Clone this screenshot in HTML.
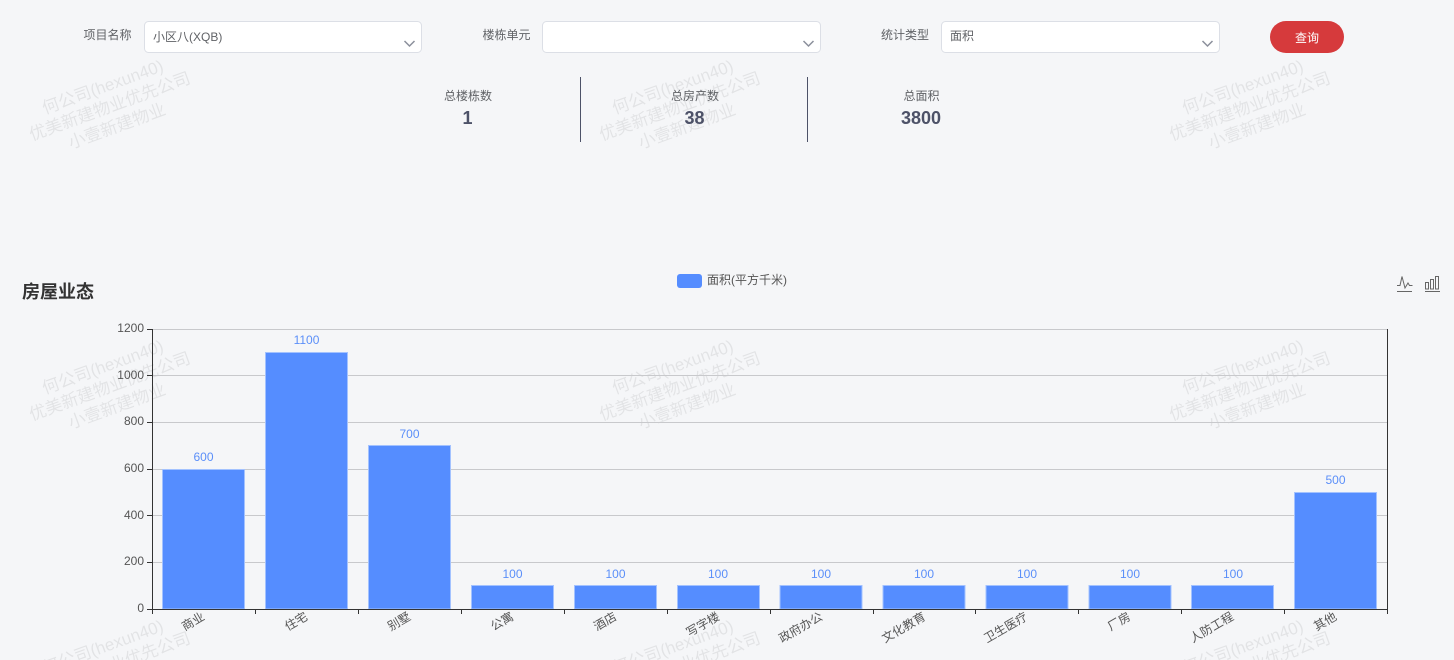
<!DOCTYPE html>
<html lang="zh">
<head>
<meta charset="utf-8">
<title>房屋业态</title>
<style>
html,body{margin:0;padding:0;width:1454px;height:660px;overflow:hidden;background:#f5f6f8}
svg{display:block;position:absolute;left:0;top:0}
text{font-family:"Liberation Sans","Noto Sans CJK SC",sans-serif}
.wm text{font-size:17px;fill:#000;fill-opacity:.075;text-anchor:middle}
.lab{font-size:12px;fill:#606266}
.val{font-size:12px;fill:#5b8ff9;text-anchor:middle}
.yl{font-size:12px;fill:#555;text-anchor:end}
.xl{font-size:12px;fill:#555;text-anchor:end}
.st{font-size:12px;fill:#606266;text-anchor:middle}
.sn{font-size:18px;font-weight:700;fill:#4d5268;text-anchor:middle}
.bar{fill:#558dff;stroke:#a3c2ff;stroke-width:1}
.grid{stroke:#c8c9cc;stroke-width:1}
.ax{stroke:#333;stroke-width:1}
.box{fill:#fff;stroke:#dcdfe6;stroke-width:1}
.ch{fill:none;stroke:#8b8f9b;stroke-width:1.5}
</style>
</head>
<body>
<svg width="1454" height="660" viewBox="0 0 1454 660" xmlns="http://www.w3.org/2000/svg">
<defs>
<g id="w" class="wm">
<text x="0" y="-15.500">何公司(hexun40)</text>
<text x="0" y="5">优美新建物业优先公司</text>
<text x="0" y="26">小壹新建物业</text>
</g>
</defs>
<use href="#w" transform="translate(110,107) rotate(-20)"/>
<use href="#w" transform="translate(680,107) rotate(-20)"/>
<use href="#w" transform="translate(1250,107) rotate(-20)"/>
<use href="#w" transform="translate(110,387) rotate(-20)"/>
<use href="#w" transform="translate(680,387) rotate(-20)"/>
<use href="#w" transform="translate(1250,387) rotate(-20)"/>
<use href="#w" transform="translate(110,667) rotate(-20)"/>
<use href="#w" transform="translate(680,667) rotate(-20)"/>
<use href="#w" transform="translate(1250,667) rotate(-20)"/>

<text class="lab" x="83.500" y="39">项目名称</text>
<rect class="box" x="144.5" y="21.5" width="277" height="31" rx="4"/>
<text class="lab" x="153" y="41">小区八(XQB)</text>
<path class="ch" d="M404.500 41l5 5 5-5"/>

<text class="lab" x="482.500" y="39">楼栋单元</text>
<rect class="box" x="542.500" y="21.500" width="278" height="31" rx="4"/>
<path class="ch" d="M803.500 41l5 5 5-5"/>

<text class="lab" x="881" y="39">统计类型</text>
<rect class="box" x="941.500" y="21.500" width="278" height="31" rx="4"/>
<text class="lab" x="950" y="40">面积</text>
<path class="ch" d="M1202.500 41l5 5 5-5"/>

<rect x="1270" y="21" width="74" height="32" rx="16" fill="#d63a3c"/>
<text x="1307" y="42" font-size="12" fill="#fff" text-anchor="middle">查询</text>

<text class="st" x="468" y="100">总楼栋数</text>
<text class="sn" x="467.500" y="124">1</text>
<rect x="580" y="77" width="1" height="65" fill="#4d5268"/>
<text class="st" x="695" y="100">总房产数</text>
<text class="sn" x="694.500" y="124">38</text>
<rect x="807" y="77" width="1" height="65" fill="#4d5268"/>
<text class="st" x="921.500" y="100">总面积</text>
<text class="sn" x="921" y="124">3800</text>

<text x="22" y="298" font-size="18" font-weight="700" fill="#333">房屋业态</text>

<rect x="677" y="274" width="25" height="14" rx="3" fill="#558dff"/>
<text x="707" y="284" font-size="12" fill="#555">面积(平方千米)</text>

<g fill="none" stroke="#666" stroke-width="1">
<path d="M1397 291.500h15"/>
<path d="M1397 285.500h3l2-9 3 11.500 3-5 1.500 2.500h3"/>
<path d="M1425 291.500h15"/>
<rect x="1425.500" y="282.500" width="3" height="6.500"/>
<rect x="1430.500" y="279.500" width="3" height="9.500"/>
<rect x="1435.500" y="276.500" width="3" height="12.500"/>
</g>

<g class="grid">
<path d="M152 329.500H1387"/>
<path d="M152 375.500H1387"/>
<path d="M152 422.500H1387"/>
<path d="M152 469.500H1387"/>
<path d="M152 515.500H1387"/>
<path d="M152 562.500H1387"/>
</g>

<rect class="bar" x="162.500" y="469.500" width="82" height="139.500"/>
<rect class="bar" x="265.500" y="352.500" width="82" height="256.500"/>
<rect class="bar" x="368.500" y="445.500" width="82" height="163.500"/>
<rect class="bar" x="471.500" y="585.500" width="82" height="23.500"/>
<rect class="bar" x="574.500" y="585.500" width="82" height="23.500"/>
<rect class="bar" x="677.500" y="585.500" width="82" height="23.500"/>
<rect class="bar" x="780" y="585.500" width="82" height="23.500"/>
<rect class="bar" x="883" y="585.500" width="82" height="23.500"/>
<rect class="bar" x="986" y="585.500" width="82" height="23.500"/>
<rect class="bar" x="1089" y="585.500" width="82" height="23.500"/>
<rect class="bar" x="1191.500" y="585.500" width="82" height="23.500"/>
<rect class="bar" x="1294.500" y="492.500" width="82" height="116.500"/>

<g class="ax">
<path d="M152.500 329V609"/>
<path d="M1387.500 329V614"/>
<path d="M152 609.500H1388"/>
<path d="M147 329.500h5M147 375.500h5M147 422.500h5M147 469.500h5M147 515.500h5M147 562.500h5M147 609.500h5"/>
<path d="M152.500 609v5M255.500 609v5M358.500 609v5M461.500 609v5M564.500 609v5M667.500 609v5M770.500 609v5M873.500 609v5M975.500 609v5M1078.500 609v5M1181.500 609v5M1284.500 609v5"/>
</g>

<text class="yl" x="144" y="332">1200</text>
<text class="yl" x="144" y="379">1000</text>
<text class="yl" x="144" y="425">800</text>
<text class="yl" x="144" y="472">600</text>
<text class="yl" x="144" y="519">400</text>
<text class="yl" x="144" y="565">200</text>
<text class="yl" x="144" y="612">0</text>

<text class="val" x="203.500" y="461">600</text>
<text class="val" x="306.500" y="344">1100</text>
<text class="val" x="409.500" y="438">700</text>
<text class="val" x="512.500" y="578">100</text>
<text class="val" x="615.500" y="578">100</text>
<text class="val" x="718" y="578">100</text>
<text class="val" x="821" y="578">100</text>
<text class="val" x="924" y="578">100</text>
<text class="val" x="1027" y="578">100</text>
<text class="val" x="1130" y="578">100</text>
<text class="val" x="1233" y="578">100</text>
<text class="val" x="1335.500" y="484">500</text>

<text class="xl" transform="translate(205.500,619) rotate(-30)">商业</text>
<text class="xl" transform="translate(308.500,619) rotate(-30)">住宅</text>
<text class="xl" transform="translate(411.500,619) rotate(-30)">别墅</text>
<text class="xl" transform="translate(514.500,619) rotate(-30)">公寓</text>
<text class="xl" transform="translate(617.500,619) rotate(-30)">酒店</text>
<text class="xl" transform="translate(720.500,619) rotate(-30)">写字楼</text>
<text class="xl" transform="translate(823.500,619) rotate(-30)">政府办公</text>
<text class="xl" transform="translate(926.500,619) rotate(-30)">文化教育</text>
<text class="xl" transform="translate(1028.500,619) rotate(-30)">卫生医疗</text>
<text class="xl" transform="translate(1131.500,619) rotate(-30)">厂房</text>
<text class="xl" transform="translate(1234.500,619) rotate(-30)">人防工程</text>
<text class="xl" transform="translate(1337.500,619) rotate(-30)">其他</text>
</svg>
</body>
</html>
